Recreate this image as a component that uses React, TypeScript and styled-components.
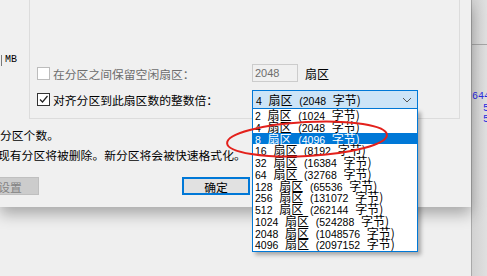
import React from "react";
import styled, { createGlobalStyle } from "styled-components";

const GlobalStyle = createGlobalStyle`
  html, body {
    margin: 0;
    padding: 0;
    background: #f0f0f0;
  }
  body {
    font-family: "Noto Sans CJK SC", "Noto Sans", sans-serif;
    font-size: 12px;
    color: #000;
  }
`;

const sizes = [
  [2, 1024],
  [4, 2048],
  [8, 4096],
  [16, 8192],
  [32, 16384],
  [64, 32768],
  [128, 65536],
  [256, 131072],
  [512, 262144],
  [1024, 524288],
  [2048, 1048576],
  [4096, 2097152],
];

const Screen = styled.div`
  position: relative;
  display: flex;
  width: 487px;
  height: 276px;
  overflow: hidden;
  background: #efefef;
`;

const Dialog = styled.div`
  position: relative;
  z-index: 1;
  display: flex;
  flex-direction: column;
  width: 471px;
  height: 207px;
  flex-shrink: 0;
  background: #f0f0f0;
  box-shadow: 0 7px 14px rgba(0, 0, 0, 0.3);
`;

const TopRow = styled.div`
  display: flex;
  height: 119px;
`;

const LeftCol = styled.div`
  width: 29px;
  display: flex;
  align-items: flex-start;
  padding-top: 53px;
  box-sizing: border-box;
`;

const InputEdge = styled.div`
  width: 1px;
  height: 11px;
  margin-top: 2px;
  border-right: 1px solid #7a7a7a;
  margin-right: 3px;
`;

const Unit = styled.span`
  font-family: "Liberation Mono", monospace;
  font-size: 10px;
  line-height: 14px;
`;

const GroupBox = styled.div`
  width: 431px;
  box-sizing: border-box;
  border: 1px solid #dcdcdc;
  border-top: none;
  padding: 64px 0 0 7px;
  display: grid;
  grid-template-columns: 215px 1fr;
  grid-template-rows: 18px 19px;
  row-gap: 8px;
  align-content: start;
`;

const CheckRow = styled.label<{ $disabled?: boolean }>`
  display: flex;
  align-items: center;
  gap: 3px;
  font-size: 11.8px;
  white-space: nowrap;
  color: ${(p) => (p.$disabled ? "#6d6d6d" : "#000")};
`;

const Box = styled.span<{ $disabled?: boolean }>`
  width: 13px;
  height: 13px;
  flex-shrink: 0;
  box-sizing: border-box;
  border: 1px solid ${(p) => (p.$disabled ? "#bcbcbc" : "#333")};
  background: #fff;
  display: flex;
  align-items: center;
  justify-content: center;
`;

const FieldRow = styled.div`
  display: flex;
  align-items: center;
  gap: 7px;
`;

const NumInput = styled.div`
  width: 46px;
  height: 18px;
  box-sizing: border-box;
  border: 1px solid #cccccc;
  background: #f0f0f0;
  color: #6d6d6d;
  font-family: "Liberation Sans", sans-serif;
  font-size: 11px;
  line-height: 16px;
  padding-left: 2px;
`;

const ComboWrap = styled.div`
  position: relative;
  width: 166px;
`;

const Combo = styled.div`
  height: 19px;
  box-sizing: border-box;
  border: 1px solid #0078d7;
  background: #cce4f7;
  display: flex;
  align-items: center;
  justify-content: space-between;
  padding: 0 5px 0 3px;
  white-space: pre;
  word-spacing: 4px;
`;

const List = styled.div`
  position: absolute;
  left: 0;
  top: 19px;
  width: 166px;
  box-sizing: border-box;
  border: 1px solid #0078d7;
  border-top: none;
  background: #fff;
  box-shadow: 3px 3px 4px rgba(0, 0, 0, 0.3);
  padding-bottom: 1px;
`;

const Item = styled.div<{ $selected?: boolean }>`
  height: 11.75px;
  line-height: 11.75px;
  padding-left: 2px;
  white-space: pre;
  word-spacing: 4px;
  font-size: 12px;
  background: ${(p) => (p.$selected ? "#0078d7" : "transparent")};
  color: ${(p) => (p.$selected ? "#fff" : "#000")};
`;

const Num = styled.span`
  font-family: "Liberation Sans", sans-serif;
  font-size: 10.5px;
`;

const Notes = styled.div`
  margin-top: 6px;
`;

const Note = styled.div<{ $shift?: number }>`
  line-height: 20px;
  font-size: 11.8px;
  margin-left: ${(p) => p.$shift ?? 0}px;
  white-space: nowrap;
`;

const ButtonRow = styled.div`
  display: flex;
  margin-top: 12px;
`;

const Button = styled.div<{ $default?: boolean; $disabled?: boolean; $w: number }>`
  width: ${(p) => p.$w}px;
  height: 18px;
  flex-shrink: 0;
  box-sizing: border-box;
  display: flex;
  align-items: center;
  justify-content: center;
  font-size: 11.8px;
  background: ${(p) => (p.$disabled ? "#cccccc" : "#e1e1e1")};
  color: ${(p) => (p.$disabled ? "#838383" : "#000")};
  border: ${(p) => (p.$default ? "2px solid #0078d7" : "1px solid #bfbfbf")};
`;

const RightStrip = styled.div`
  flex: 1;
  display: flex;
  flex-direction: column;
  border-left: 1px solid #a9a9a9;
  background: linear-gradient(to right, #d2d2d2, #e2e2e2);
`;

const StripTop = styled.div`
  height: 44px;
  border-bottom: 1px solid #a5a5a5;
`;

const Code = styled.div`
  padding-top: 46px;
  color: #2a2ae0;
  font-family: "Liberation Mono", monospace;
  font-size: 10px;
  line-height: 11.5px;
  white-space: pre;
`;

const CodeLine = styled.div<{ $indent?: number }>`
  margin-left: ${(p) => p.$indent ?? 0}px;
`;

const Annotation = styled.svg`
  position: absolute;
  left: 0;
  top: 0;
  z-index: 5;
  pointer-events: none;
`;

const Chevron = () => (
  <svg width="10" height="6" viewBox="0 0 10 6">
    <path d="M1 1 L5 5 L9 1" fill="none" stroke="#555" strokeWidth="1" />
  </svg>
);

const Tick = () => (
  <svg width="11" height="11" viewBox="0 0 11 11">
    <path d="M2 5.5 L4.5 8 L9.5 2" fill="none" stroke="#222" strokeWidth="1.2" />
  </svg>
);

const label = (n: number, b: number) => (
  <>
    <Num>{n}</Num> 扇区 <Num>({b}</Num> 字节)
  </>
);

export default function App() {
  return (
    <>
      <GlobalStyle />
      <Screen>
        <Dialog>
          <TopRow>
            <LeftCol>
              <InputEdge />
              <Unit>MB</Unit>
            </LeftCol>
            <GroupBox>
              <CheckRow $disabled>
                <Box $disabled />
                在分区之间保留空闲扇区：
              </CheckRow>
              <FieldRow>
                <NumInput>2048</NumInput>
                <span>扇区</span>
              </FieldRow>
              <CheckRow>
                <Box>
                  <Tick />
                </Box>
                对齐分区到此扇区数的整数倍：
              </CheckRow>
              <ComboWrap>
                <Combo>
                  <span>{label(4, 2048)}</span>
                  <Chevron />
                </Combo>
                <List>
                  {sizes.map(([n, b]) => (
                    <Item key={n} $selected={n === 8}>
                      {label(n, b)}
                    </Item>
                  ))}
                </List>
              </ComboWrap>
            </GroupBox>
          </TopRow>
          <Notes>
            <Note>分区个数。</Note>
            <Note $shift={-2}>现有分区将被删除。新分区将会被快速格式化。</Note>
          </Notes>
          <ButtonRow>
            <Button $disabled $w={58} style={{ marginLeft: -19 }}>
              设置
            </Button>
            <Button $default $w={68} style={{ marginLeft: 143 }}>
              确定
            </Button>
          </ButtonRow>
        </Dialog>
        <RightStrip>
          <StripTop />
          <Code>
            <CodeLine>644</CodeLine>
            <CodeLine $indent={11}>5</CodeLine>
            <CodeLine $indent={11}>5</CodeLine>
          </Code>
        </RightStrip>
        <Annotation width="487" height="276">
          <ellipse
            cx="307"
            cy="139"
            rx="80"
            ry="17"
            transform="rotate(-3 307 139)"
            fill="none"
            stroke="#e3211c"
            strokeWidth="2"
          />
        </Annotation>
      </Screen>
    </>
  );
}
